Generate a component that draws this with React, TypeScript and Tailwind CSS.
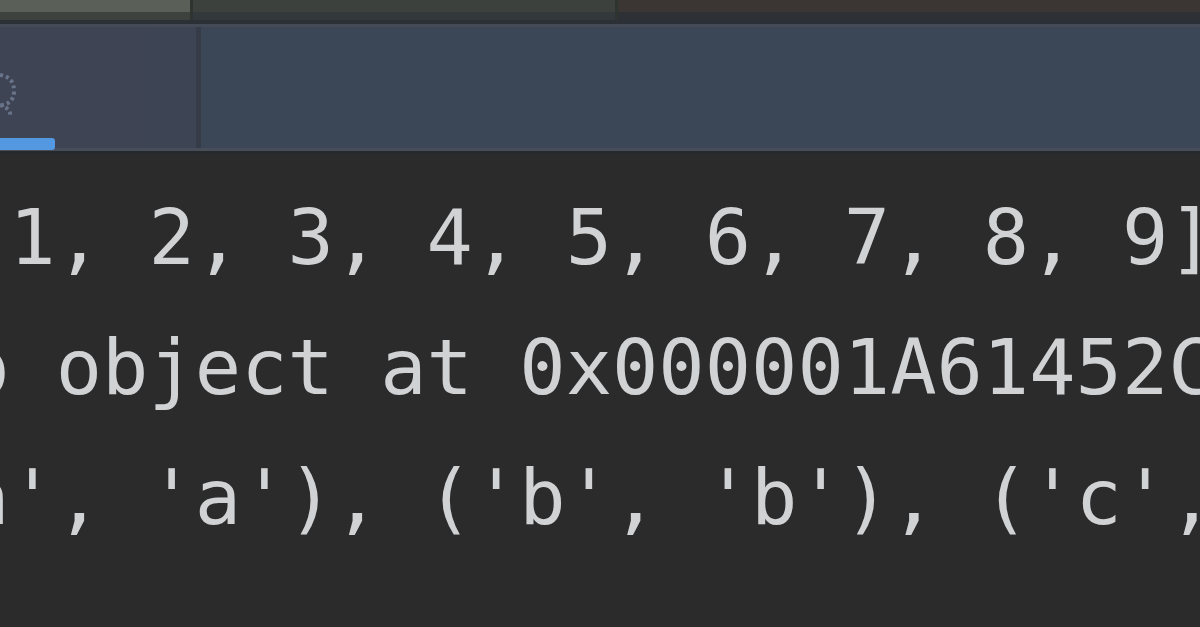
import React from "react";

const lines = [
  "[1, 2, 3, 4, 5, 6, 7, 8, 9]",
  "p object at 0x000001A61452C8>",
  "a', 'a'), ('b', 'b'), ('c', 'c')]",
];

const App = () => {
  return (
    <div className="w-[1200px] h-[627px] overflow-hidden bg-[#2b2b2b] flex flex-col">
      {/* window strip on top */}
      <div className="h-[20px] flex shrink-0">
        <div className="w-[190px] flex flex-col">
          <div className="h-[12px] bg-[#5a5f58]" />
          <div className="flex-1 bg-[#3d423f]" />
        </div>
        <div className="w-[3px] bg-[#2f3431]" />
        <div className="w-[422px] flex flex-col">
          <div className="h-[12px] bg-[#3c413d]" />
          <div className="flex-1 bg-[#33383a]" />
        </div>
        <div className="w-[3px] bg-[#2e3531]" />
        <div className="flex-1 flex flex-col">
          <div className="h-[12px] bg-[#3b3533]" />
          <div className="flex-1 bg-[#2d3034]" />
        </div>
      </div>
      <div className="h-[4px] shrink-0 bg-[#2b3036]" />

      {/* tool window tab bar */}
      <div className="h-[124px] shrink-0 flex bg-[#3b4555] border-t-[3px] border-[#444b57]">
        <div className="w-[146px] relative bg-[#3e4454]">
          <svg className="absolute left-0 top-[42px]" width="24" height="50" viewBox="0 0 24 50">
            <path d="M0 6 Q14 8 14 22 Q14 34 2 36 M0 36 Q12 40 10 48" fill="none" stroke="#69748a" strokeWidth="4" strokeDasharray="3 3" />
          </svg>
          <div className="absolute left-0 bottom-[-2px] w-[55px] h-[12px] rounded-r-[3px] bg-[#5498e2]" />
        </div>
        <div className="w-[50px] bg-[#3d4453]" />
        <div className="w-[5px] bg-[#363c47]" />
        <div className="flex-1 bg-[#3b4656]" />
      </div>
      <div className="h-[3px] shrink-0 bg-[#474e59]" />
      <div className="h-[3px] shrink-0 bg-[#26292c]" />

      {/* console output */}
      <div className="flex-1 pt-[19px] bg-[#2b2b2b]">
        <div
          className="ml-[-37px] text-[77px] leading-[130px] text-[#d0d2d4] whitespace-pre"
          style={{ fontFamily: '"DejaVu Sans Mono", "Liberation Mono", monospace' }}
        >
          {lines.map((line, i) => (
            <div key={i}>{line}</div>
          ))}
        </div>
      </div>
    </div>
  );
};

export default App;
